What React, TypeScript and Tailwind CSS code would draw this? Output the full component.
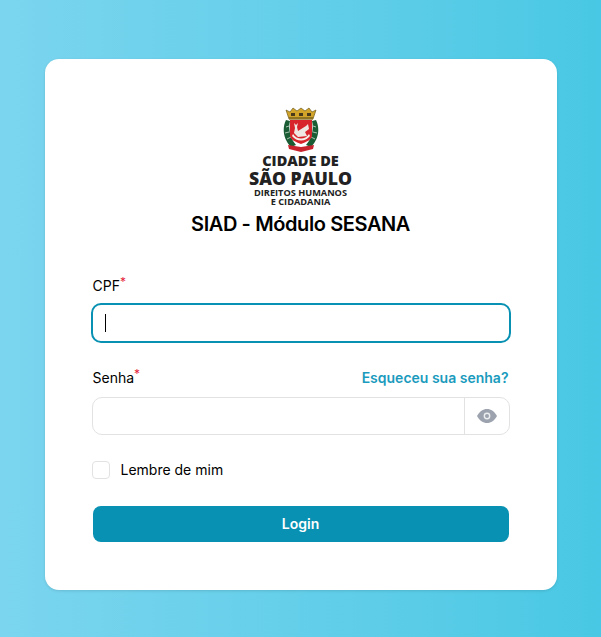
function Crest() {
  return (
    <svg width="36" height="45" viewBox="0 0 36 45" className="block">
      {/* laurel */}
      <path d="M3 13 C-1 21 0 32 8 40 L13 38 C7 31 5 22 7 14 Z" fill="#1a5c33" />
      <path d="M33 13 C37 21 36 32 28 40 L23 38 C29 31 31 22 29 14 Z" fill="#1a5c33" />
      <path d="M3 20 L6 19 M2 26 L6 25 M4 32 L8 30 M33 20 L30 19 M34 26 L30 25 M32 32 L28 30" stroke="#e8f0ea" strokeWidth="0.7" />
      {/* crown */}
      <path d="M3 3 L7 5 L10 1 L14 4 L18 1 L22 4 L26 1 L29 5 L33 3 L30 12 L6 12 Z" fill="#d2a52a" stroke="#6f5a1a" strokeWidth="0.7" />
      <path d="M8 6 H12 V9 H8 Z M16 6 H20 V9 H16 Z M24 6 H28 V9 H24 Z" fill="#4a3a1c" />
      <rect x="6" y="10" width="24" height="2.5" fill="#8f7320" />
      {/* shield */}
      <path d="M7 13 H29 V28 C29 33 23 35 18 37 C13 35 7 33 7 28 Z" fill="#d8252b" />
      {/* arm and cross */}
      <path d="M11 16 L13 18 L15 16 L14 20 L15 24 L23 19 L25 17 L26 22 L22 25 L24 29 L15 30 L11 26 L12 21 Z" fill="#efe8e2" />
      <path d="M10 27 C14 33 22 33 26 27 L27 29 C22 35 14 35 9 29 Z" fill="#f4efe9" />
      {/* ribbon */}
      <path d="M5 38 L18 40 L31 38 L30 42 L18 45 L6 42 Z" fill="#c8222c" />
    </svg>
  );
}

function EyeIcon() {
  return (
    <svg width="20" height="14" viewBox="0 0 20 14" className="block">
      <path d="M0 7 C2.5 2.5 6 0 10 0 C14 0 17.5 2.5 20 7 C17.5 11.5 14 14 10 14 C6 14 2.5 11.5 0 7 Z" fill="#9ca3af" />
      <circle cx="10" cy="7" r="3.4" fill="#eceef0" />
      <circle cx="10" cy="7" r="2" fill="#9ca3af" />
    </svg>
  );
}

function Logo() {
  return (
    <div className="flex flex-col items-center text-[#222] font-['Open_Sans',sans-serif] whitespace-nowrap">
      <Crest />
      <div className="mt-[2px] text-[14.5px] leading-[13px] font-extrabold">CIDADE DE</div>
      <div className="mt-[2px] text-[17.6px] leading-[19px] font-extrabold">SÃO PAULO</div>
      <div className="text-[9.2px] leading-[9px] font-bold">DIREITOS HUMANOS</div>
      <div className="text-[9.2px] leading-[9px] font-bold">E CIDADANIA</div>
    </div>
  );
}

function Label({ text }: { text: string }) {
  return (
    <label className="text-sm leading-5 text-black">
      {text}
      <sup className="text-[#e5243b] text-xs top-[-5px]">*</sup>
    </label>
  );
}

export default function App() {
  return (
    <div className="w-[601px] h-[637px] pt-[59px] flex items-start justify-center font-[Inter,sans-serif] bg-gradient-to-r from-[#7bd5ef] to-[#48c8e4]">
      <div className="w-[512px] h-[531px] bg-white rounded-[14px] shadow-[0_1px_3px_rgba(0,0,0,0.12)] px-[48px] pt-[48px]">
        <Logo />
        <h1 className="mt-[5px] text-center text-[20px] leading-[26px] font-semibold tracking-[-0.4px] text-black">SIAD - Módulo SESANA</h1>

        <div className="mt-[38px] h-5 leading-5">
          <Label text="CPF" />
        </div>
        <div className="mt-[8px] -mx-[2px] h-[40px] rounded-[10px] border-2 border-[#0891b2] bg-white flex items-center pl-[12px]">
          <span className="block w-[1.5px] h-[18px] bg-black" />
        </div>

        <div className="mt-[25px] h-5 flex items-center justify-between">
          <Label text="Senha" />
          <a className="text-sm font-semibold text-[#1a9bbd]">Esqueceu sua senha?</a>
        </div>
        <div className="mt-[9px] -mx-[1px] h-[38px] rounded-[10px] border border-[#e2e2e2] flex justify-end">
          <div className="w-[45px] border-l border-[#e2e2e2] flex items-center justify-center">
            <EyeIcon />
          </div>
        </div>

        <div className="mt-[25px] -ml-[1px] flex items-center gap-[11px]">
          <span className="w-[18px] h-[18px] rounded-[4px] border border-[#e2e2e2] bg-white" />
          <span className="text-sm leading-5 text-black">Lembre de mim</span>
        </div>

        <button className="mt-[26px] w-full h-[36px] rounded-[8px] bg-[#0891b2] text-white text-sm font-semibold">Login</button>
      </div>
    </div>
  );
}
